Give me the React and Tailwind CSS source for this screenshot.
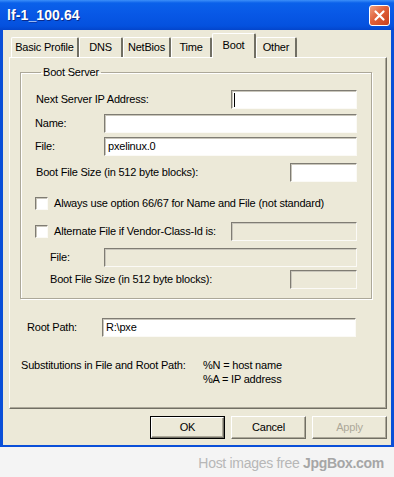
const font = "font-['Liberation_Sans',Arial,sans-serif]"

function Field({ className = '', disabled = false, value = '', caret = false }) {
  return (
    <div
      className={`flex h-[19px] items-center border border-t-[#7f7c73] border-l-[#7f7c73] border-b-[#fbfaf6] border-r-[#fbfaf6] pl-[3px] text-[11px] tracking-[-0.2px] text-black shadow-[inset_1px_1px_0_#c9c6bb] ${disabled ? 'bg-[#ece9d8]' : 'bg-white'} ${className}`}
    >
      {caret && <span className="ml-[-1px] h-[14px] w-[1px] bg-black" />}
      {value}
    </div>
  )
}

function Check() {
  return (
    <span className="h-[13px] w-[13px] shrink-0 border border-t-[#7f7c73] border-l-[#7f7c73] border-b-[#fbfaf6] border-r-[#fbfaf6] bg-white shadow-[inset_1px_1px_0_#c9c6bb]" />
  )
}

const tabs = [
  { label: 'Basic Profile', w: 'w-[68px]' },
  { label: 'DNS', w: 'w-[44px]' },
  { label: 'NetBios', w: 'w-[48px]' },
  { label: 'Time', w: 'w-[41px]' },
  { label: 'Boot', w: 'w-[44px]', active: true },
  { label: 'Other', w: 'w-[41px]' },
]

function Button({ children, primary, disabled }) {
  return (
    <div
      className={`flex h-[23px] w-[75px] items-center justify-center bg-[#ece9d8] text-[11px] ${primary ? 'border border-black' : ''}`}
    >
      <div
        className={`flex h-full w-full items-center justify-center border border-t-white border-l-white border-b-[#716f64] border-r-[#716f64] shadow-[inset_-1px_-1px_0_#aca899] ${disabled ? 'text-[#aca899]' : 'text-black'}`}
      >
        {children}
      </div>
    </div>
  )
}

export default function App() {
  return (
    <div className={`h-[477px] w-[394px] overflow-hidden bg-[#f4f4f4] ${font}`}>
      <div className="flex h-[447px] flex-col bg-[#0a4fd8]">
        <div className="flex h-[30px] shrink-0 items-center justify-between bg-[linear-gradient(to_bottom,#3c8ff9_0px,#0a61ea_3px,#0858e6_14px,#0451de_26px,#0345cc_30px)] pl-[7px] pr-[4px]">
          <span className="text-[14px] font-bold tracking-[0.1px] text-white [text-shadow:1px_1px_0_#0a2a8a]">
            lf-1_100.64
          </span>
          <div className="flex h-[21px] w-[21px] items-center justify-center rounded-[3px] border border-white bg-[linear-gradient(135deg,#f0a080,#e0603a_45%,#c8401c)]">
            <svg width="13" height="13" viewBox="0 0 13 13">
              <path d="M2.5 2.5 L10.5 10.5 M10.5 2.5 L2.5 10.5" stroke="white" strokeWidth="2.2" strokeLinecap="round" />
            </svg>
          </div>
        </div>

        <div className="mx-[3px] mb-[2px] flex flex-1 flex-col bg-[#ece9d8] pl-[6px] pr-[4px] pt-[3px] text-[11px] tracking-[-0.2px] text-black">
          <div className="flex h-[24px] items-end pl-[2px]">
            {tabs.map((t) =>
              t.active ? (
                <div
                  key={t.label}
                  className={`relative z-10 mb-[-1px] flex h-[25px] ${t.w} items-start justify-center rounded-t-[2px] border-l border-t border-r-2 border-l-white border-t-white border-r-[#716f64] bg-[#ece9d8] pt-[3px]`}
                >
                  {t.label}
                </div>
              ) : (
                <div
                  key={t.label}
                  className={`flex h-[20px] ${t.w} items-center justify-center rounded-t-[2px] border-l border-t border-r-2 border-l-white border-t-white border-r-[#716f64]`}
                >
                  {t.label}
                </div>
              )
            )}
          </div>

          <div className="flex h-[352px] flex-col border border-t-white border-l-white border-b-[#716f64] border-r-[#716f64] shadow-[inset_-1px_-1px_0_#aca899]">
            <fieldset className="ml-[10px] mr-[14px] mt-[8px] border border-[#aca899] pb-[9px] pl-[14px] pr-[14px] shadow-[inset_1px_1px_0_white,1px_1px_0_white]">
              <legend className="ml-[6px] px-[2px] leading-[13px]">Boot Server</legend>

              <div className="mt-[11px] flex h-[19px] items-center justify-between">
                <span className="pl-[1px]">Next Server IP Address:</span>
                <Field className="w-[126px]" caret />
              </div>
              <div className="mt-[5px] flex h-[19px] items-center justify-between">
                <span>Name:</span>
                <Field className="w-[253px]" />
              </div>
              <div className="mt-[4px] flex h-[19px] items-center justify-between">
                <span>File:</span>
                <Field className="w-[253px]" value="pxelinux.0" />
              </div>
              <div className="mt-[7px] flex h-[19px] items-center justify-between">
                <span className="pl-[1px]">Boot File Size (in 512 byte blocks):</span>
                <Field className="w-[67px]" />
              </div>

              <div className="mt-[15px] flex h-[13px] items-center gap-[6px]">
                <Check />
                <span>Always use option 66/67 for Name and File (not standard)</span>
              </div>

              <div className="mt-[12px] flex h-[19px] items-center justify-between">
                <div className="flex items-center gap-[6px]">
                  <Check />
                  <span>Alternate File if Vendor-Class-Id is:</span>
                </div>
                <Field className="w-[126px]" disabled />
              </div>
              <div className="mt-[7px] flex h-[19px] items-center justify-between pl-[15px]">
                <span>File:</span>
                <Field className="w-[253px]" disabled />
              </div>
              <div className="mt-[3px] flex h-[19px] items-center justify-between pl-[15px]">
                <span>Boot File Size (in 512 byte blocks):</span>
                <Field className="w-[67px]" disabled />
              </div>
            </fieldset>

            <div className="ml-[17px] mt-[19px] flex h-[19px] items-center">
              <span className="w-[75px]">Root Path:</span>
              <Field className="w-[254px]" value="R:\pxe" />
            </div>

            <div className="ml-[11px] mt-[21px] flex leading-[14px]">
              <span className="w-[182px]">Substitutions in File and Root Path:</span>
              <div className="flex flex-col">
                <span>%N = host name</span>
                <span>%A = IP address</span>
              </div>
            </div>
          </div>

          <div className="mt-[7px] flex justify-end gap-[6px]">
            <Button primary>OK</Button>
            <Button>Cancel</Button>
            <Button disabled>Apply</Button>
          </div>
        </div>
      </div>
      <div className="flex justify-end pr-[10px] pt-[7px] text-[14px] leading-[18px] tracking-[-0.3px] text-[#b7b7b7]">
        <span>
          Host images free <span className="font-bold text-[#a6a6a6]">JpgBox.com</span>
        </span>
      </div>
    </div>
  )
}
